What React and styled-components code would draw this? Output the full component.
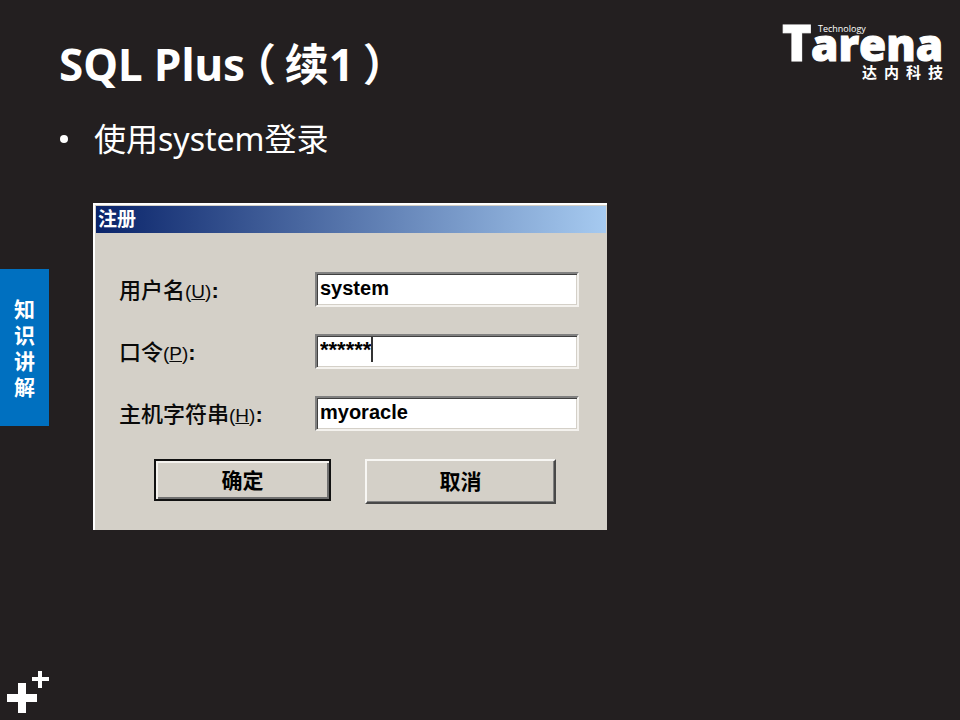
import React, { useState } from "react";
import styled, { createGlobalStyle, css } from "styled-components";

const GlobalStyle = createGlobalStyle`
  * { box-sizing: border-box; }
  body {
    margin: 0;
    background: #231f20;
    color: #fff;
    font-family: "Noto Sans", "Noto Sans CJK SC", sans-serif;
  }
`;

const Slide = styled.div`
  min-height: 100vh;
  display: grid;
  grid-template-columns: 49px minmax(0, 1fr);
  grid-template-rows: auto 1fr auto;
`;

const Header = styled.header`
  grid-column: 1 / -1;
  display: flex;
  justify-content: space-between;
  align-items: flex-start;
  padding: 20px 12px 0 59px;
`;

const Title = styled.h1`
  margin: 12px 0 0;
  font-size: 44px;
  line-height: 60px;
  font-weight: 700;
`;

const Paren = styled.span`
  padding: 0 0.2em;
  font-family: "Noto Sans CJK SC", sans-serif;
  font-feature-settings: "halt";
`;

const Logo = styled.svg`
  display: block;
  width: 168px;
  height: 64px;
  overflow: visible;
  fill: #fff;
`;

const LogoName = styled.text`
  font: 800 44px "Open Sans", sans-serif;
  stroke: #fff;
  stroke-width: 1px;
`;

const LogoInitial = styled.tspan`
  font-size: 50px;
`;

const LogoTag = styled.text`
  font: 400 9px "Open Sans", sans-serif;
`;

const LogoChinese = styled.text`
  font: 700 15px "Noto Sans CJK SC", sans-serif;
`;

const SideTab = styled.aside`
  align-self: start;
  margin-top: 175px;
  padding: 27px 14px 26px;
  background: #0070c0;
  font-size: 21px;
  line-height: 26px;
  font-weight: 700;
  text-align: center;
`;

const Main = styled.main`
  padding: 21px 44px 0 44px;
`;

const Points = styled.ul`
  margin: 0;
  padding: 0;
  list-style: none;
`;

const Point = styled.li`
  display: flex;
  align-items: center;
  gap: 26px;
  margin-left: -33px;
  font-size: 32px;
  line-height: 48px;

  &::before {
    content: "";
    width: 8px;
    height: 8px;
    border-radius: 50%;
    background: #fff;
  }
`;

const Dialog = styled.form`
  max-width: 514px;
  margin-top: 40px;
  padding-bottom: 26px;
  border-top: 2px solid #fff;
  border-left: 2px solid #fff;
  background: #d4d0c8;
  color: #0a0a0a;
  font-family: "Liberation Sans", "Noto Sans CJK SC", sans-serif;
`;

const DialogTitle = styled.h2`
  margin: 1px 1px 0;
  padding-left: 2px;
  background: linear-gradient(90deg, #0a246a, #a6caf0);
  color: #fff;
  font-size: 19px;
  line-height: 27px;
  font-weight: 700;
`;

const Fields = styled.div`
  display: grid;
  grid-template-columns: 196px minmax(0, 264px);
  row-gap: 27px;
  padding: 39px 24px 0;
  align-items: center;
`;

const Label = styled.label`
  padding-top: 4px;
  font-size: 22px;
  line-height: 28px;
  font-weight: 500;
  white-space: nowrap;
`;

const Key = styled.span`
  font-size: 19px;
`;

const Colon = styled.span`
  font-family: "Liberation Sans", sans-serif;
  font-weight: 700;
`;

const Well = styled.div`
  display: flex;
  align-items: flex-start;
  height: 35px;
  padding: 1px;
  background: #fff;
  border: 2px solid;
  border-color: #808080 #f4f2ee #f4f2ee #808080;
  box-shadow: inset 1px 1px #404040, inset -1px -1px #d4d0c8;
`;

const Input = styled.input`
  min-width: 0;
  height: 26px;
  padding: 0 2px;
  border: 0;
  outline: 0;
  background: transparent;
  color: #000;
  caret-color: transparent;
  font: 700 20px "Liberation Sans", sans-serif;
  ${(p) => (p.$hug ? css`field-sizing: content; padding-right: 0; font-size: 22px;` : css`flex: 1;`)}
`;

const Caret = styled.span`
  width: 2px;
  height: 25px;
  background: #333;
`;

const Actions = styled.div`
  display: flex;
  align-items: flex-start;
  gap: 34px;
  padding: 28px 50px 0 59px;
`;

const Button = styled.button`
  padding: 0 0 3px;
  background: #d4d0c8;
  color: #000;
  font: 700 21px "Noto Sans CJK SC", sans-serif;
  border: 2px solid;
  ${(p) =>
    p.$primary
      ? css`
          flex: 0 1 177px;
          height: 42px;
          border-color: #111;
          box-shadow: inset 2px 2px #f4f2ee, inset -2px -2px #707070;
        `
      : css`
          flex: 0 1 191px;
          height: 45px;
          border-color: #f8f7f4 #484848 #484848 #f8f7f4;
          box-shadow: inset -1px -1px #808080;
        `}
`;

const Footer = styled.footer`
  grid-column: 1 / -1;
  padding: 0 6px 6px;
`;

const Pluses = styled.svg`
  display: block;
  width: 44px;
  height: 44px;
  fill: #fff;
`;

const fields = [
  { id: "user", label: "用户名", hotkey: "U", value: "system" },
  { id: "password", label: "口令", hotkey: "P", value: "******", caret: true },
  { id: "host", label: "主机字符串", hotkey: "H", value: "myoracle" },
];

function Field({ id, label, hotkey, value, caret }) {
  const [text, setText] = useState(value);
  return (
    <>
      <Label htmlFor={id}>
        {label}
        <Key>
          (<u>{hotkey}</u>)
        </Key>
        <Colon>:</Colon>
      </Label>
      <Well>
        <Input id={id} $hug={caret} value={text} autoComplete="off" onChange={(e) => setText(e.target.value)} />
        {caret && <Caret />}
      </Well>
    </>
  );
}

function TarenaLogo() {
  return (
    <Logo viewBox="0 0 168 64" role="img" aria-label="Tarena Technology 达内科技">
      <LogoName y="41">
        <LogoInitial x="2">T</LogoInitial>
        <tspan x="31">arena</tspan>
      </LogoName>
      <LogoTag x="38" y="12">Technology</LogoTag>
      <LogoChinese x="82 104 126 148" y="58">达内科技</LogoChinese>
    </Logo>
  );
}

export default function App() {
  return (
    <Slide>
      <GlobalStyle />
      <Header>
        <Title>
          SQL Plus<Paren>（</Paren>续1<Paren>）</Paren>
        </Title>
        <TarenaLogo />
      </Header>
      <SideTab>知识讲解</SideTab>
      <Main>
        <Points>
          <Point>使用system登录</Point>
        </Points>
        <Dialog onSubmit={(e) => e.preventDefault()}>
          <DialogTitle>注册</DialogTitle>
          <Fields>
            {fields.map((field) => (
              <Field key={field.id} {...field} />
            ))}
          </Fields>
          <Actions>
            <Button $primary type="submit">确定</Button>
            <Button type="button">取消</Button>
          </Actions>
        </Dialog>
      </Main>
      <Footer>
        <Pluses viewBox="0 0 44 44" aria-hidden="true">
          <path d="M12 13h8v11h11v8H20v11h-8V32H1v-8h11z" />
          <path d="M32 1h4v6h7v4h-7v7h-4v-7h-6V7h6z" />
        </Pluses>
      </Footer>
    </Slide>
  );
}
